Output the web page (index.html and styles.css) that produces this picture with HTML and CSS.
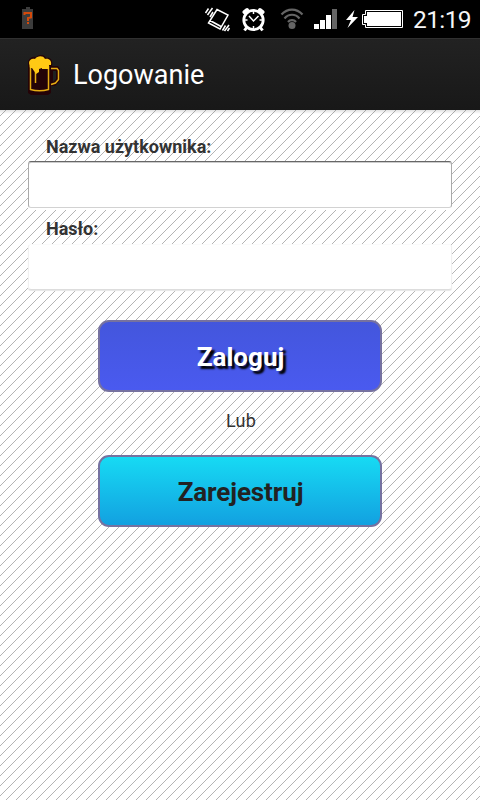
FILE: index.html
```html
<!DOCTYPE html>
<html lang="pl">
<head>
<meta charset="utf-8">
<title>Logowanie</title>
<link rel="stylesheet" href="styles.css">
</head>
<body>
<div class="status">
  <svg class="unknown-battery" width="12" height="22" viewBox="0 0 12 22"><path fill="#3c3c3c" d="M4 0h4v2h3v20H0V2h4z"/><path fill="none" stroke="#d34a0c" stroke-width="2" d="M2.500 8V6H9v4.500L6 11v3M5 16h2"/></svg>
  <svg class="status-icons" width="210" height="38" viewBox="195 0 210 38">
    <g fill="none" stroke="#fff" stroke-width="1.500">
      <path d="M217 9.500l11 5.500-8 14-11.500-6zM210 20.500l11 6M205.500 13l3-4.500M207.500 15l5-7M210 17l3-5M222.500 30.500l3-5M224.500 31l4.500-6M227.500 31l2-3"/>
    </g>
    <g fill="none" stroke="#fff">
      <circle cx="253.500" cy="20" r="9.700" stroke-width="2.800"/>
      <path stroke-width="4" stroke-linecap="round" d="M244.500 12l2.500-2M262.500 12l-2.500-2"/>
      <path stroke-width="3" d="M247 27l-2.500 3.500M260 27l2.500 3.500"/>
      <path stroke-width="1.500" d="M249 16l4.500 5 5-5M253.500 11v3M253.500 26v3M244.500 20h3M259.500 20h3"/>
    </g>
    <g fill="none" stroke="#656565" stroke-width="2.200">
      <path d="M281.500 14.500c6-6.500 15-6.500 21 0M284.500 18.500c4-5 11-5 15 0M288 22c2-2.500 6-2.500 8 0"/>
      <circle cx="292" cy="25.500" r="3.500" fill="#656565" stroke="none"/>
    </g>
    <path fill="#fff" d="M314 24h5v5h-5zM320 20h5v9h-5zM326 15h5v14h-5z"/>
    <path fill="#656565" d="M332 9h5v20h-5z"/>
    <path fill="#fff" d="M354.500 10l-8.500 10h5l-3.500 8 10.500-11h-5.500z"/>
    <path fill="none" stroke="#fff" d="M365.500 10.500h37v17h-37v-3h-3v-10h3z"/>
    <path fill="#fff" d="M367 12h34v14h-34v-3h-3v-7h3z"/>
  </svg>
  <span class="clock">21:19</span>
</div>
<header class="bar">
  <svg class="mug" width="36" height="42" viewBox="26 54 36 42">
    <path fill="#240307" d="M28 62c0-4 4-7 8-6 3-3 8-3 10 1 5-1 7 3 6 8h6l2 3v12l-5 5h-4v7l-3 2H31l-3-2z"/>
    <path fill="#202020" d="M53 70h3v8l-3 3z"/>
    <path fill="none" stroke="#e5ad13" stroke-width="1.500" d="M30.500 65v23.500c5 1.500 13 1.500 18 0V65M51 67.500h6l1.500 2v9l-3 3.500-4.500 1.500M35.500 71v11"/>
    <path fill="#ffc914" d="M29 62c0-3 3-5 6-4 2-3 8-4 10 0 4-1 7 2 6 6h-2v4h-7v-1l-3 1v3l-3 2-4-6h-2z"/>
  </svg>
  <h1 class="title">Logowanie</h1>
</header>
<main class="content">
  <label class="label" for="user">Nazwa użytkownika:</label>
  <input class="field field-user" id="user" type="text">
  <label class="label" for="pass">Hasło:</label>
  <input class="field field-pass" id="pass" type="password">
  <button class="button login">Zaloguj</button>
  <p class="or">Lub</p>
  <button class="button register">Zarejestruj</button>
</main>
</body>
</html>
```

FILE: styles.css
```css
* { box-sizing: border-box; }
body {
  margin: 0;
  height: 800px;
  overflow: hidden;
  display: flex;
  flex-direction: column;
  font-family: Roboto, "Noto Sans", sans-serif;
  color: #333;
}
.status {
  height: 38px;
  flex: none;
  display: flex;
  background: #000;
  padding-right: 9px;
}
.unknown-battery { margin: 7px 0 0 22px; }
.status-icons { margin-left: 161px; }
.clock {
  margin-left: auto;
  font-size: 24.5px;
  letter-spacing: -.6px;
  line-height: 39px;
  color: #f6f6f6;
}
.bar {
  height: 72px;
  flex: none;
  display: flex;
  align-items: center;
  background: linear-gradient(#222, #181818);
  border-top: 1px solid #303030;
}
.mug { margin: 2px 0 0 26px; }
.title {
  margin: 0 0 0 11px;
  font-size: 27px;
  line-height: 36px;
  font-weight: 400;
  color: #fff;
}
.content {
  flex: 1;
  display: flex;
  flex-direction: column;
  align-items: center;
  padding: 26px 28px 0;
  background:
    linear-gradient(rgba(0,0,0,.12), transparent) 0 0 / 100% 4px no-repeat,
    url("data:image/svg+xml,%3Csvg xmlns='http://www.w3.org/2000/svg' width='10' height='10' shape-rendering='crispEdges'%3E%3Cpath fill='%23b4b4b4' d='M5 0h1v1h-1zM4 1h1v1h-1zM3 2h1v1h-1zM2 3h1v1h-1zM1 4h1v1h-1zM0 5h1v1h-1zM9 6h1v1h-1zM8 7h1v1h-1zM7 8h1v1h-1zM6 9h1v1h-1z'/%3E%3C/svg%3E") #fff;
}
.label {
  align-self: flex-start;
  margin-left: 18px;
  height: 25px;
  line-height: 22px;
  font-size: 18px;
  font-weight: 700;
}
.field {
  width: 424px;
  height: 47px;
  flex: none;
  padding: 0 18px;
  border: 1px solid #aaa;
  border-radius: 3px;
  background: #fff;
  font: 18px Roboto, sans-serif;
}
.field-user {
  border-color: #666 #aaa #d2d2d2;
  box-shadow: 0 2px 0 #fff, inset 0 1px 0 #ccc;
  margin-bottom: 10px;
}
.field-pass {
  border-color: #fafafa #f0f0f0 #ddd;
  box-shadow: 0 1px 1px #e6e6e6;
  height: 46px;
  margin: 1px 0 30px;
}
.button {
  width: 284px;
  height: 72px;
  flex: none;
  padding: 2px 0 0 1px;
  border: 2px solid #7672a0;
  border-radius: 11px;
  font: 700 26px/36px Roboto, sans-serif;
}
.login {
  color: #fff;
  background: linear-gradient(#4356dc, #4a5af0);
  background-origin: border-box;
  text-shadow: 3px 3px 2px #000;
}
.or {
  margin: 17px 0 22px;
  font-size: 18px;
  line-height: 24px;
  padding-left: 2px;
  letter-spacing: .2px;
}
.register {
  color: #222;
  letter-spacing: -.1px;
  background: linear-gradient(#17dcf4, #129fe0);
  background-origin: border-box;
}
```
